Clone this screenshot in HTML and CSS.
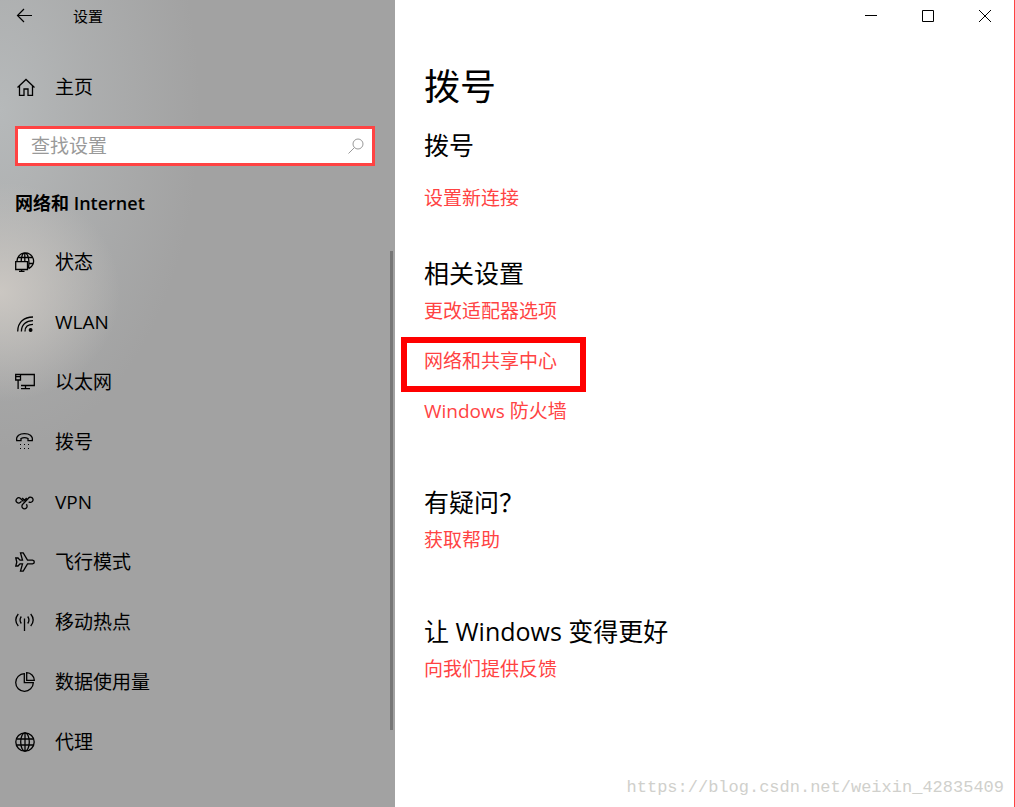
FILE: index.html
```html
<!DOCTYPE html>
<html lang="zh-CN">
<head>
<meta charset="utf-8">
<meta name="viewport" content="width=device-width, initial-scale=1">
<title>设置</title>
<link rel="stylesheet" href="styles.css">
</head>
<body>
<div class="window">
  <aside class="sidebar">
    <header class="titlebar">
      <button class="back" type="button" aria-label="返回">
        <svg class="icon" width="20" height="20" viewBox="0 0 20 20"><path d="M17 9.500H2.500M9 3L2.500 9.500L9 16"/></svg>
      </button>
      <span class="app-name">设置</span>
    </header>
    <a class="home" href="#home">
      <svg class="icon" width="20" height="20" viewBox="0 0 20 20"><path d="M1.500 10.500L10 2.500L18.500 10.500M3.500 9V18.300H8V12H12V18.300H16.500V9"/></svg>
      <span>主页</span>
    </a>
    <form class="search">
      <input class="search-input" type="search" placeholder="查找设置" aria-label="查找设置">
      <button class="search-button" type="submit" aria-label="搜索">
        <svg class="icon" width="18" height="18" viewBox="0 0 18 18"><circle cx="11" cy="7" r="5"/><path d="M7.500 10.500L1.500 16.500"/></svg>
      </button>
    </form>
    <h2 class="category">网络和 Internet</h2>
    <nav class="nav">
      <a class="nav-item" href="#status">
        <svg class="icon" width="20" height="20" viewBox="0 0 20 20"><path d="M2 9A8.300 8.300 0 1 1 13.800 16.700M3.500 5.500H17M13.500 11.500H18.300M6.200 9.500C6.200 4 8 .8 9.800 .8C13 .8 15 9 13.300 16.500M9.800 .8V9.500"/><path d="M.7 9.600H12.500V17.500H.7ZM6.600 17.500V19.500M4 19.500H9.500"/></svg>
        <span>状态</span>
      </a>
      <a class="nav-item" href="#wlan">
        <svg class="icon" width="20" height="20" viewBox="0 0 20 20"><path d="M2.700 19.500C2.700 10 9 5 18 5M6.400 19.500C6.400 12.500 11 8.700 18 8.700M10 19.500C10 14.700 13 12.300 18 12.300M13.300 19.500"/><circle class="solid" cx="15.600" cy="18" r="1.300"/></svg>
        <span>WLAN</span>
      </a>
      <a class="nav-item" href="#ethernet">
        <svg class="icon" width="20" height="20" viewBox="0 0 20 20"><path d="M5.500 2.500H19.300V13.500H6M.7 2.500H5.500V8H.7ZM.7 4.700H5.500M3.100 8V17M10.500 13.500V16.500M6 16.700H15"/></svg>
        <span>以太网</span>
      </a>
      <a class="nav-item" href="#dialup">
        <svg class="icon" width="20" height="20" viewBox="0 0 20 20"><path d="M1.700 8.700C.8 3.500 5 1.700 9.500 1.700S18.200 3.500 17.300 8.700H13V6.500C11 5.500 8 5.500 6 6.500V8.700Z"/><path class="dots" d="M5 12.500H6M9 12.500H10M13 12.500H14M5 16.500H6M9 16.500H10M13 16.500H14"/></svg>
        <span>拨号</span>
      </a>
      <a class="nav-item" href="#vpn">
        <svg class="icon" width="20" height="20" viewBox="0 0 20 20"><path d="M8.500 9.500L5.500 6.500A2.600 2.600 0 1 0 5.500 10.300L6.500 9.300M7.200 6L9.500 8.300L11.700 6M13.700 9.700A2.600 2.600 0 1 0 13.200 6.500L7.700 12.300A2.600 2.600 0 1 0 11.300 12.300"/></svg>
        <span>VPN</span>
      </a>
      <a class="nav-item" href="#airplane">
        <svg class="icon" width="20" height="20" viewBox="0 0 20 20"><path d="M.8 6H3L5 8.200H7.500L5.500 .8H8.200L12.500 8.200H17.500Q19.300 8.500 19.300 10T17.500 11.800H12.500L8.200 19.200H5.500L7.500 11.800H5L3 14H.8L1.800 10Z"/></svg>
        <span>飞行模式</span>
      </a>
      <a class="nav-item" href="#hotspot">
        <svg class="icon" width="20" height="20" viewBox="0 0 20 20"><path d="M9.500 6.500V19M6.300 4.500Q3.800 8 6.300 11.500M12.700 4.500Q15.200 8 12.700 11.500M3.300 2Q-1.700 8 3.300 14M15.700 2Q20.700 8 15.700 14"/></svg>
        <span>移动热点</span>
      </a>
      <a class="nav-item" href="#data">
        <svg class="icon" width="20" height="20" viewBox="0 0 20 20"><path d="M9.300 1.700A8.800 8.800 0 1 0 18.300 10.700H9.300ZM11.700 .7V8.300H19.300A7.700 7.700 0 0 0 11.700 .7Z"/></svg>
        <span>数据使用量</span>
      </a>
      <a class="nav-item" href="#proxy">
        <svg class="icon" width="20" height="20" viewBox="0 0 20 20"><circle cx="10" cy="10" r="9.200"/><ellipse cx="10" cy="10" rx="4.300" ry="9.200"/><path d="M1.500 7H18.500M1.500 13H18.500M10 .8V19.200"/></svg>
        <span>代理</span>
      </a>
    </nav>
    <div class="scroll-thumb"></div>
  </aside>
  <main class="main">
    <div class="controls">
      <button class="control" type="button" aria-label="最小化"><svg width="12" height="12" viewBox="0 0 12 12"><path d="M0 5.500H12"/></svg></button>
      <button class="control" type="button" aria-label="最大化"><svg width="12" height="12" viewBox="0 0 12 12"><path d="M.5 .5H11.500V11.500H.5Z"/></svg></button>
      <button class="control" type="button" aria-label="关闭"><svg width="12" height="12" viewBox="0 0 12 12"><path d="M0 0L12 12M12 0L0 12"/></svg></button>
    </div>
    <div class="content">
      <h1 class="page-title">拨号</h1>
      <section class="section section-first">
        <h2 class="section-title">拨号</h2>
        <a class="link" href="#new">设置新连接</a>
      </section>
      <section class="section">
        <h2 class="section-title">相关设置</h2>
        <div class="links">
          <a class="link" href="#adapter">更改适配器选项</a>
          <a class="link marked" href="#sharing">网络和共享中心</a>
          <a class="link" href="#firewall">Windows 防火墙</a>
        </div>
      </section>
      <section class="section">
        <h2 class="section-title">有疑问？</h2>
        <a class="link" href="#help">获取帮助</a>
      </section>
      <section class="section">
        <h2 class="section-title">让 Windows 变得更好</h2>
        <a class="link" href="#feedback">向我们提供反馈</a>
      </section>
    </div>
    <footer class="watermark">https://blog.csdn.net/weixin_42835409</footer>
  </main>
</div>
</body>
</html>
```

FILE: styles.css
```css
* {
  box-sizing: border-box;
}

body {
  margin: 0;
  font-family: "Open Sans", "Noto Sans CJK SC", sans-serif;
  font-size: 19px;
  line-height: 26px;
  color: #000;
  background: #fff;
}

button {
  padding: 0;
  border: 0;
  background: none;
}

a {
  color: inherit;
  text-decoration: none;
}

h1,
h2 {
  margin: 0;
  font-weight: 400;
}

.window {
  display: grid;
  grid-template-columns: 395px 1fr;
  min-height: 100vh;
  border-right: 1px solid #ff4343;
}

.sidebar {
  position: relative;
  display: flex;
  flex-direction: column;
  padding: 0 20px 32px 15px;
  background:
    radial-gradient(ellipse 120px 110px at 0 292px, #cbc7c2 0%, rgba(203, 199, 194, 0.6) 40%, rgba(203, 199, 194, 0) 100%),
    radial-gradient(ellipse 200px 340px at 0 110px, #b6b9ba 0%, rgba(182, 185, 186, 0.5) 45%, rgba(182, 185, 186, 0) 100%),
    #a2a2a2;
}

.icon {
  flex: none;
  fill: none;
  stroke: currentColor;
  stroke-width: 1.3;
}

.icon .solid {
  fill: currentColor;
}

.icon .dots {
  stroke-width: 1;
}

.titlebar {
  display: flex;
  align-items: center;
  gap: 38px;
  height: 32px;
}

.back {
  display: flex;
  color: #000;
}

.back .icon {
  stroke-width: 1.2;
}

.app-name {
  font-size: 15px;
}

.home {
  display: flex;
  align-items: center;
  gap: 19px;
  height: 60px;
  margin: 25px 0 9px;
  padding-left: 1px;
}

.search {
  display: flex;
  align-items: center;
  height: 40px;
  padding: 0 7px 0 13px;
  border: 3px solid #ff4343;
  background: #fff;
}

.search-input {
  flex: 1;
  min-width: 0;
  padding: 0;
  border: 0;
  outline: 0;
  background: none;
  font: inherit;
}

.search-input::placeholder {
  color: #999;
}

.search-button {
  display: flex;
  color: #999;
}

.search-button .icon {
  stroke-width: 1;
}

.category {
  margin: 24px 0 16px;
  font-size: 18px;
  font-weight: 600;
}

.nav {
  display: flex;
  flex-direction: column;
}

.nav-item {
  display: flex;
  align-items: center;
  gap: 20px;
  height: 60px;
}

.scroll-thumb {
  position: absolute;
  top: 251px;
  right: 2px;
  bottom: 77px;
  width: 3px;
  background: #767676;
}

.main {
  display: flex;
  flex-direction: column;
}

.controls {
  display: flex;
  justify-content: flex-end;
  height: 32px;
  padding-right: 1px;
}

.control {
  display: flex;
  align-items: center;
  justify-content: center;
  width: 57px;
}

.control svg {
  fill: none;
  stroke: #000;
}

.content {
  flex: 1;
  padding: 31px 29px 0;
}

.page-title {
  margin-bottom: 17px;
  font-size: 36px;
  line-height: 48px;
}

.section {
  display: flex;
  flex-direction: column;
  align-items: flex-start;
  gap: 8px;
  margin-bottom: 61px;
}

.section-first {
  gap: 23px;
  margin-bottom: 45px;
}

.section-title {
  font-size: 25px;
  line-height: 34px;
}

.links {
  display: flex;
  flex-direction: column;
  align-items: flex-start;
  gap: 24px;
}

.link {
  color: #ff4343;
}

.marked {
  position: relative;
}

.marked::after {
  content: "";
  position: absolute;
  inset: -11px -29px -18px -23px;
  border: 6px solid #f00;
}

.watermark {
  padding: 0 10px 6px;
  font-family: "Liberation Mono", monospace;
  font-size: 17px;
  color: #d0d0cc;
  text-align: right;
}
```
